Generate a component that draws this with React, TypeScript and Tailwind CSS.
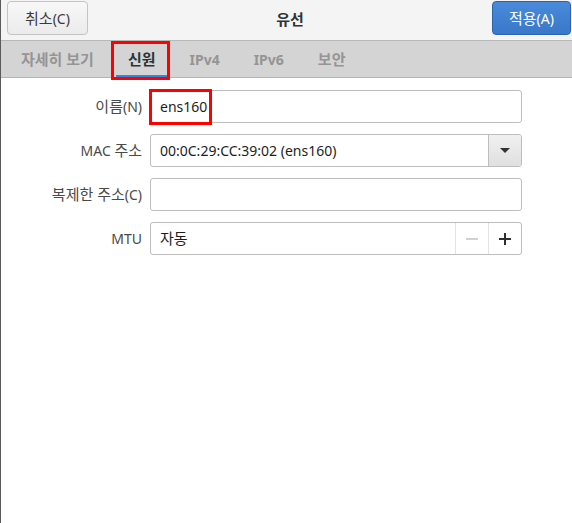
import React from 'react'

const font = { fontFamily: '"Noto Sans", "Noto Sans CJK KR", sans-serif' }

// Hangul glyphs sit a touch larger than the latin ones in this dialog
const Ko = ({ children }: { children: React.ReactNode }) => <span className="text-[15px]">{children}</span>

const tabs: { key: string; label: React.ReactNode; active?: boolean }[] = [
  { key: 'details', label: <Ko>자세히 보기</Ko> },
  { key: 'identity', label: <Ko>신원</Ko>, active: true },
  { key: 'ipv4', label: 'IPv4' },
  { key: 'ipv6', label: 'IPv6' },
  { key: 'security', label: <Ko>보안</Ko> },
]

const Row = ({ label, children }: { label: React.ReactNode; children: React.ReactNode }) => (
  <div className="flex items-center h-[33px]">
    <div className="w-[142px] pr-[1px] text-right text-[14px] text-[#4a4a4a]">{label}</div>
    <div className="ml-[7px] w-[372px] h-[33px] flex">{children}</div>
  </div>
)

export default function App() {
  return (
    <div
      className="relative w-[572px] h-[523px] bg-white border-l border-[#5a5a5a] flex flex-col overflow-hidden"
      style={font}
    >
      {/* header bar */}
      <div className="h-[41px] shrink-0 bg-[#f4f4f4] border-b border-[#b8b8b8] flex items-start justify-between pt-[1px] pl-[6px] pr-[1px]">
        <button className="w-[81px] h-[34px] rounded-[4px] border border-[#c4c4c4] bg-gradient-to-b from-[#f8f8f8] to-[#ebebeb] text-[14px] text-[#3a3a3a]">
          <Ko>취소</Ko>(C)
        </button>
        <div className="pt-[7px] text-[14px] font-bold text-[#2e3436]">
          <Ko>유선</Ko>
        </div>
        <button className="w-[79px] h-[34px] rounded-[4px] border border-[#2a63ad] bg-gradient-to-b from-[#4a8ada] to-[#3a78c8] text-[14px] text-white">
          <Ko>적용</Ko>(A)
        </button>
      </div>

      {/* tab strip */}
      <div className="h-[37px] shrink-0 bg-[#d4d4d4] border-b border-[#b4b4b4] flex items-stretch pl-[8px] gap-[10px]">
        {tabs.map((t) => (
          <div
            key={t.key}
            className={
              t.active
                ? 'px-[12px] flex items-center text-[14px] font-bold text-[#2e3436] border-b-2 border-[#3a84e0] pt-[2px]'
                : 'px-[12px] flex items-center text-[14px] font-bold text-[#959595]'
            }
          >
            {t.label}
          </div>
        ))}
      </div>

      {/* form */}
      <div className="flex flex-col gap-[11px] pt-[12px]">
        <Row label={<><Ko>이름</Ko>(N)</>}>
          <div className="flex-1 rounded-[3px] border border-[#bdbdbd] bg-white flex items-center px-[9px] text-[14px] text-[#1e1e1e]">
            ens160
          </div>
        </Row>
        <Row label={<>MAC <Ko>주소</Ko></>}>
          <div className="flex-1 flex rounded-[3px] border border-[#bdbdbd] bg-white overflow-hidden">
            <div className="flex-1 flex items-center px-[9px] text-[14px] text-[#1e1e1e]">
              00:0C:29:CC:39:02 (ens160)
            </div>
            <div className="w-[33px] border-l border-[#bdbdbd] bg-gradient-to-b from-[#f0f0f0] to-[#e0e0e0] flex items-center justify-center">
              <svg width="10" height="6" viewBox="0 0 10 6">
                <path d="M0 0 L10 0 L5 5 Z" fill="#333" />
              </svg>
            </div>
          </div>
        </Row>
        <Row label={<><Ko>복제한 주소</Ko>(C)</>}>
          <div className="flex-1 rounded-[3px] border border-[#bdbdbd] bg-white" />
        </Row>
        <Row label="MTU">
          <div className="flex-1 flex rounded-[3px] border border-[#bdbdbd] bg-white overflow-hidden">
            <div className="flex-1 flex items-center px-[9px] text-[14px] text-[#1e1e1e]">
              <Ko>자동</Ko>
            </div>
            <div className="w-[33px] border-l border-[#e2e2e2] flex items-center justify-center">
              <svg width="12" height="12" viewBox="0 0 12 12">
                <path d="M0 6 H12" stroke="#d2d2d2" strokeWidth="2" />
              </svg>
            </div>
            <div className="w-[33px] border-l border-[#e2e2e2] flex items-center justify-center">
              <svg width="12" height="12" viewBox="0 0 12 12">
                <path d="M0 6 H12 M6 0 V12" stroke="#2e2e2e" strokeWidth="2" />
              </svg>
            </div>
          </div>
        </Row>
      </div>

      {/* red highlight boxes drawn over the dialog */}
      <div className="absolute left-[110px] top-[41px] w-[59px] h-[39px] border-[3px] border-[#ff0000]" />
      <div className="absolute left-[148px] top-[89px] w-[63px] h-[36px] border-[3px] border-[#ff0000]" />
    </div>
  )
}
